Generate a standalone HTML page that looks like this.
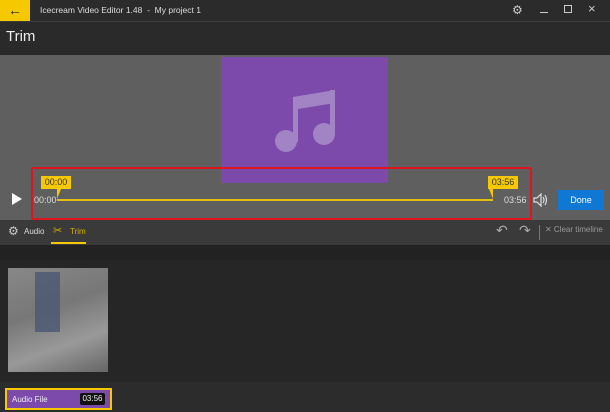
<!DOCTYPE html><html><head><style>
body{margin:0;width:610px;height:412px;overflow:hidden;background:#262626;font-family:"Liberation Sans",sans-serif;position:relative}
div{position:absolute;box-sizing:border-box}
</style></head><body>
<div style="left:0;top:0;width:610px;height:21px;background:#2b2b2b"></div>
<div style="left:0;top:0;width:30px;height:21px;background:#f5c800;color:#222;font-size:14px;text-align:center;line-height:20px">&#8592;</div>
<div style="left:40px;top:5px;color:#ddd;font-size:8.5px">Icecream Video Editor 1.48 &nbsp;- &nbsp;My project 1</div>
<div style="left:512px;top:3px;color:#ccc;font-size:12px">⚙</div>
<div style="left:540px;top:4px;width:8px;height:9px;border-bottom:1px solid #ccc"></div>
<div style="left:564px;top:5px;width:8px;height:8px;border:1px solid #ccc"></div>
<div style="left:588px;top:1px;color:#ccc;font-size:13px">×</div>
<div style="left:0;top:21px;width:610px;height:34px;background:#2a2a2a;border-top:1px solid #3a3a3a"></div>
<div style="left:6px;top:28px;color:#eee;font-size:15px">Trim</div>
<div style="left:0;top:55px;width:610px;height:165px;background:#5f5f5f"></div>
<div style="left:221px;top:57px;width:167px;height:126px;background:#7b4aab"></div>
<svg style="position:absolute;left:220px;top:55px" width="170" height="130" viewBox="0 0 170 130"><path d="M73 42 L115 35 V48 L78 54 Z" fill="#a283c4"/><rect x="73" y="42" width="5" height="45" fill="#a283c4"/><rect x="110" y="35" width="5" height="45" fill="#a283c4"/><circle cx="66" cy="86" r="11" fill="#a283c4"/><circle cx="104" cy="79" r="11" fill="#a283c4"/></svg>
<div style="left:31px;top:167px;width:501px;height:53px;border:2px solid #e0141e;border-radius:2px"></div>
<div style="left:12px;top:193px;width:0;height:0;border-left:10px solid #fff;border-top:6px solid transparent;border-bottom:6px solid transparent"></div>
<div style="left:34px;top:195px;color:#ddd;font-size:9px">00:00</div>
<div style="left:504px;top:195px;color:#ddd;font-size:9px">03:56</div>
<div style="left:57px;top:199px;width:436px;height:2px;background:#e0c010"></div>
<div style="left:41px;top:176px;width:30px;height:13px;background:#f5c800;color:#333;font-size:9px;text-align:center;line-height:13px">00:00</div>
<div style="left:57px;top:189px;border-right:4px solid transparent;border-top:10px solid #f5c800"></div>
<div style="left:488px;top:176px;width:30px;height:13px;background:#f5c800;color:#333;font-size:9px;text-align:center;line-height:13px">03:56</div>
<div style="left:489px;top:189px;border-left:4px solid transparent;border-top:10px solid #f5c800"></div>
<svg style="position:absolute;left:533px;top:193px" width="16" height="14" viewBox="0 0 16 14"><path d="M1 5 H4 L8 1 V13 L4 9 H1 Z" fill="none" stroke="#ddd" stroke-width="1.2"/><path d="M10 4 Q12 7 10 10 M12 2 Q15 7 12 12" fill="none" stroke="#ddd" stroke-width="1.2"/></svg>
<div style="left:558px;top:190px;width:46px;height:20px;background:#0f78d4;color:#fff;font-size:9px;text-align:center;line-height:20px">Done</div>
<div style="left:0;top:220px;width:610px;height:25px;background:#3a3a3a"></div>
<div style="left:8px;top:224px;color:#ccc;font-size:12px">⚙</div>
<div style="left:24px;top:227px;color:#ddd;font-size:8px">Audio</div>
<div style="left:53px;top:224px;color:#d4b000;font-size:11px">✂</div>
<div style="left:70px;top:227px;color:#d4b000;font-size:8px">Trim</div>
<div style="left:51px;top:242px;width:35px;height:2px;background:#f5c800"></div>
<div style="left:496px;top:222px;color:#aaa;font-size:14px">↶</div>
<div style="left:519px;top:222px;color:#aaa;font-size:14px">↷</div>
<div style="left:539px;top:225px;width:1px;height:15px;background:#777"></div>
<div style="left:545px;top:225px;color:#999;font-size:8px">✕ Clear timeline</div>
<div style="left:0;top:245px;width:610px;height:15px;background:#222"></div>
<div style="left:8px;top:268px;width:100px;height:104px;background:linear-gradient(160deg,#888,#777 40%,#999 70%,#666);"></div>
<div style="left:35px;top:272px;width:25px;height:60px;background:#4a5770;opacity:.8"></div>
<div style="left:0;top:382px;width:610px;height:30px;background:#2c2c2c"></div>
<div style="left:5px;top:388px;width:107px;height:22px;border:2px solid #f5c800;background:#7b4aab"></div>
<div style="left:12px;top:395px;color:#eee;font-size:8px">Audio File</div>
<div style="left:80px;top:393px;width:25px;height:12px;background:#111;color:#eee;font-size:8px;text-align:center;line-height:12px;border-radius:2px">03:56</div>
</body></html>
